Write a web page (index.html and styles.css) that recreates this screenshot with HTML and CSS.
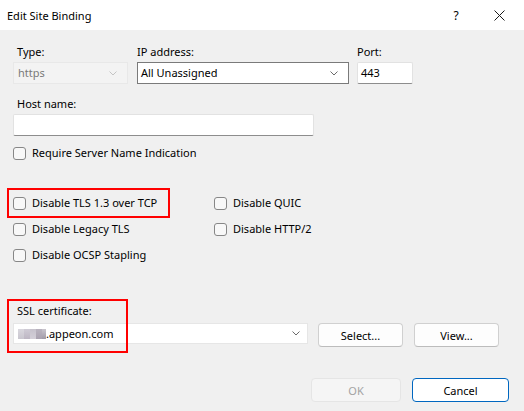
FILE: index.html
```html
<!DOCTYPE html>
<html lang="en">
<head>
  <meta charset="UTF-8">
  <title>Edit Site Binding</title>
  <link rel="stylesheet" href="styles.css">
</head>
<body>
  <div class="titlebar">
    <span class="title">Edit Site Binding</span>
    <span class="help">?</span>
    <span class="close">
      <svg width="11" height="11" viewBox="0 0 11 11"><path d="M0.5 0.5L10.5 10.5M10.5 0.5L0.5 10.5" stroke="#1a1a1a" stroke-width="1" fill="none"/></svg>
    </span>
  </div>

  <div class="content">
    <!-- type / ip / port -->
    <div class="fields">
      <div class="field type">
        <label class="lbl indent">Type:</label>
        <div class="combo disabled">
          <span class="val">https</span>
          <svg class="chev" width="8" height="5" viewBox="0 0 8 5"><path d="M0.5 0.5L4 4L7.5 0.5" stroke="#c4c4c4" fill="none"/></svg>
        </div>
      </div>
      <div class="field ip">
        <label class="lbl">IP address:</label>
        <div class="combo ip-combo">
          <span class="val">All Unassigned</span>
          <svg class="chev" width="8" height="5" viewBox="0 0 8 5"><path d="M0.5 0.5L4 4L7.5 0.5" stroke="#6b6b6b" fill="none"/></svg>
        </div>
      </div>
      <div class="field port">
        <label class="lbl">Port:</label>
        <div class="textbox">443</div>
      </div>
    </div>

    <div class="field host">
      <label class="lbl indent">Host name:</label>
      <div class="textbox host-box"></div>
    </div>

    <div class="check sni"><span class="box"></span>Require Server Name Indication</div>

    <!-- protocol options -->
    <div class="options">
      <div class="check mark"><span class="box"></span>Disable TLS 1.3 over TCP</div>
      <div class="check"><span class="box"></span>Disable QUIC</div>
      <div class="check"><span class="box"></span>Disable Legacy TLS</div>
      <div class="check"><span class="box"></span>Disable HTTP/2</div>
      <div class="check"><span class="box"></span>Disable OCSP Stapling</div>
    </div>

    <!-- certificate -->
    <div class="cert">
      <label class="lbl indent">SSL certificate:</label>
      <div class="cert-row">
        <div class="combo cert-combo">
          <span class="val"><span class="blur"><i></i><i></i><i></i><i></i><i></i></span>.appeon.com</span>
          <svg class="chev" width="8" height="5" viewBox="0 0 8 5"><path d="M0.5 0.5L4 4L7.5 0.5" stroke="#6b6b6b" fill="none"/></svg>
        </div>
        <button class="btn select">Select...</button>
        <button class="btn view">View...</button>
      </div>
      <span class="annot"></span>
    </div>

    <div class="actions">
      <button class="btn ok" disabled>OK</button>
      <button class="btn cancel">Cancel</button>
    </div>
  </div>
</body>
</html>
```

FILE: styles.css
```css
*{margin: 0;padding: 0;box-sizing: border-box;}
body{width: 524px;height: 411px;overflow: hidden;background: #f0f0f0;color: #000;font: 11px "Segoe UI", "Noto Sans", sans-serif;}

/* title bar */
.titlebar{height: 30px;background: #fff;display: flex;align-items: center;padding-left: 7px;}
.title{flex: 1;line-height: 16px;padding-top: 1px;}
.help{width: 40px;text-align: center;line-height: 16px;font-size: 12px;padding-top: 2px;}
.close{width: 46px;margin-right: 2px;display: flex;justify-content: center;align-items: center;padding-top: 1px;}

.content{padding: 14px 15px 0 13px;}

/* labels + inputs */
.lbl{display: block;line-height: 16px;height: 16px;margin-bottom: 2px;white-space: nowrap;}
.lbl.indent{padding-left: 4px;}
.fields{display: flex;}
.field.ip{margin-left: 9px;}
.field.port{margin-left: 8px;}

.combo{height: 22px;display: flex;align-items: center;justify-content: space-between;padding: 0 10px 0 4px;background: #fff;}
.combo .val{line-height: 16px;white-space: nowrap;display: flex;align-items: center;}
.combo.disabled{width: 115px;background: #f3f3f3;border: 1px solid #e8e8e8;color: #7a7a7a;}
.ip-combo{width: 212px;border: 1px solid #7a7a7a;padding-left: 3px;}
.cert-combo{width: 295px;height: 21px;border: 1px solid #e6e6e6;padding-left: 4px;padding-right: 7px;}

.textbox{height: 22px;background: #fff;border: 1px solid #e2e2e2;border-bottom-color: #8d8d8d;border-radius: 2px;line-height: 20px;padding-left: 3px;}
.field.port .textbox{width: 56px;}
.host{margin-top: 12px;}
.host-box{width: 301px;}

/* checkboxes */
.check{display: flex;align-items: center;white-space: nowrap;line-height: 16px;}
.box{width: 13px;height: 13px;border: 1px solid #878787;border-radius: 3px;background: #f8f8f8;margin-right: 6px;flex: none;}
.sni{height: 16px;margin-top: 9px;}

.options{display: grid;grid-template-columns: 201px auto;grid-auto-rows: 26px;margin: 29px 0 0 -4px;}
.options .check{padding-left: 4px;}
.options .mark{width: 159px;outline: 2px solid #f00;}

/* certificate */
.cert{position: relative;margin-top: 35px;}
.cert .lbl{margin-bottom: 4px;}
.cert-row{display: flex;align-items: flex-start;}
.blur{display: inline-flex;height: 10px;}
.blur i{display: block;width: 6px;height: 10px;}
.blur i:nth-child(1){background: linear-gradient(#d9d7de, #c9c6cf);}
.blur i:nth-child(2){background: linear-gradient(#cfcbd5, #bdb6c3);}
.blur i:nth-child(3){background: linear-gradient(#c6c2cc, #d3cfd8);}
.blur i:nth-child(4){background: linear-gradient(#b9b3bf, #a9a2b0);}
.blur i:nth-child(5){width: 4px;background: linear-gradient(#c9c5cd, #9f99a6);}
.annot{position: absolute;left: -6px;top: -4px;width: 121px;height: 54px;border: 2px solid #f00;}

/* buttons */
.btn{height: 24px;font: inherit;color: #000;background: #fdfdfd;border: 1px solid #d0d0d0;border-bottom-color: #bcbcbc;border-radius: 4px;}
.select{width: 85px;margin-left: 10px;}
.view{width: 85px;margin-left: 11px;}
.actions{display: flex;justify-content: flex-end;margin-top: 31px;}
.ok{width: 90px;background: #f5f5f5;border-color: #e5e5e5;color: #a3a3a3;}
.cancel{width: 97px;margin-left: 11px;background: #fff;border-color: #0067c0;}
```
